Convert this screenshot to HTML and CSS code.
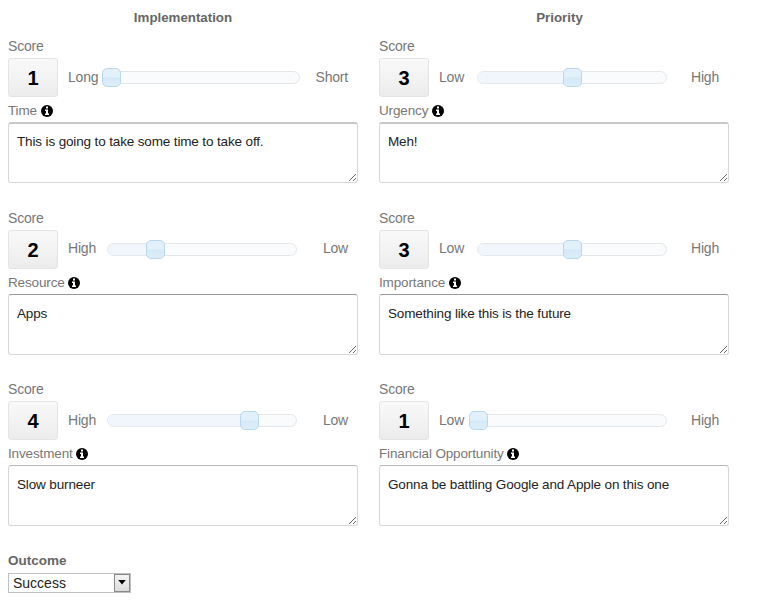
FILE: index.html
```
<!DOCTYPE html>
<html lang="en">
<head>
<meta charset="utf-8">
<title>Scores</title>
<link rel="stylesheet" href="styles.css">
</head>
<body>
<svg width="0" height="0" class="defs"><symbol id="info" viewBox="0 0 12 12"><circle cx="6" cy="6" r="6" fill="#000"/><path fill="#fff" d="M5 1.5h2v2H5zM4 4.5h3v4h1V10H4V8.500h1V6H4z"/></symbol></svg>
<main class="board">
<section class="column">
<h2>Implementation</h2>
<article class="card"><div class="caption">Score</div><div class="rating"><output>1</output><span class="from from-long">Long</span><div class="track"><div class="fill" style="width:0%"><i class="handle"></i></div></div><span class="to">Short</span></div><div class="name">Time <svg><use href="#info"/></svg></div><textarea class="first">This is going to take some time to take off.</textarea></article>
<article class="card"><div class="caption">Score</div><div class="rating"><output>2</output><span class="from">High</span><div class="track"><div class="fill" style="width:25%"><i class="handle"></i></div></div><span class="to">Low</span></div><div class="name">Resource <svg><use href="#info"/></svg></div><textarea class="crisp">Apps</textarea></article>
<article class="card"><div class="caption">Score</div><div class="rating"><output>4</output><span class="from">High</span><div class="track"><div class="fill" style="width:75%"><i class="handle"></i></div></div><span class="to">Low</span></div><div class="name">Investment <svg><use href="#info"/></svg></div><textarea>Slow burneer</textarea></article>
</section>
<section class="column">
<h2 class="priority">Priority</h2>
<article class="card"><div class="caption">Score</div><div class="rating"><output>3</output><span class="from from-low">Low</span><div class="track"><div class="fill" style="width:50%"><i class="handle"></i></div></div><span class="to">High</span></div><div class="name">Urgency <svg><use href="#info"/></svg></div><textarea class="first">Meh!</textarea></article>
<article class="card"><div class="caption">Score</div><div class="rating"><output>3</output><span class="from from-low">Low</span><div class="track"><div class="fill" style="width:50%"><i class="handle"></i></div></div><span class="to">High</span></div><div class="name">Importance <svg><use href="#info"/></svg></div><textarea class="crisp">Something like this is the future</textarea></article>
<article class="card"><div class="caption">Score</div><div class="rating"><output>1</output><span class="from from-low">Low</span><div class="track"><div class="fill" style="width:0%"><i class="handle"></i></div></div><span class="to">High</span></div><div class="name">Financial Opportunity <svg><use href="#info"/></svg></div><textarea>Gonna be battling Google and Apple on this one</textarea></article>
</section>
</main>
<footer class="outcome"><label>Outcome</label><div class="select"><span>Success</span><b><svg viewBox="0 0 6 4"><path d="M0 0h6L3 3.500z"/></svg></b></div></footer>
</body>
</html>
```
FILE: styles.css
```
* { box-sizing: border-box; }
body { margin: 0; background: #fff; color: #777; font: 13.5px/20px "Liberation Sans", Arial, sans-serif; letter-spacing: -0.14px; }
.defs { display: block; }
.board { display: grid; grid-template-columns: 350px 350px; column-gap: 21px; padding: 8px 0 0 8px; }
h2 { margin: 0 0 8px; color: #666; font-size: 13.3px; line-height: 20px; letter-spacing: 0; text-align: center; }
.priority { padding-left: 11px; }
.card { height: 171.5px; }
.caption { font-size: 14px; letter-spacing: -0.2px; }
.rating { display: flex; align-items: center; height: 39px; margin-top: 2px; padding-right: 10px; font-size: 14px; letter-spacing: -0.2px; }
output { width: 50px; height: 39px; border: 1px solid #e4e4e4; border-radius: 3px; background: linear-gradient(#f9f9f9, #ececec); color: #000; font-size: 20px; font-weight: bold; line-height: 38px; letter-spacing: 0; text-align: center; }
.from { width: 39px; margin: -2px 0 0 10px; }
.from-low { width: 38px; }
.from-long { width: 42px; }
.track { width: 190px; height: 13px; border: 1px solid #e4e7e9; border-radius: 7px; background: #fafbfc; }
.from-long + .track { width: 198px; margin-left: -8px; padding-left: 8px; }
.fill { position: relative; height: 100%; border-radius: 6px 0 0 6px; background: #f0f6fb; }
.handle { position: absolute; right: -9.5px; top: -4px; width: 19px; height: 19px; border: 1px solid #b9d8ee; border-radius: 5px; background: linear-gradient(#e2f0fa 0 48%, #d4e9f8 52%, #dceef9); }
.to { margin: -2px 0 0 auto; }
.name { height: 20px; margin-top: 4px; }
.name svg { width: 12px; height: 12px; vertical-align: -2px; }
textarea { display: block; width: 350px; height: 61px; margin-top: 1px; padding: 9px 8px; border: 1px solid #d7d7d7; border-top: 1px solid #b8b8b8; border-radius: 3px; outline: 0; resize: vertical; color: #222; font: inherit; letter-spacing: inherit; overflow: hidden; }
.first { padding-top: 8px; border-top: 2px solid #c8c8c8; }
.crisp { border-top-color: #999; }
.outcome { margin: 0 0 0 8px; }
.outcome label { display: block; color: #666; font-size: 13.5px; font-weight: bold; letter-spacing: 0; }
.select { display: flex; width: 123px; height: 20px; margin-top: 2px; border: 1px solid #bfc0c3; background: #fff; color: #222; font-size: 14px; line-height: 19px; letter-spacing: 0; }
.select span { flex: 1; padding-left: 4px; }
.select b { display: grid; place-items: center; width: 16px; height: 18px; border: 1px solid #888; background: linear-gradient(#f4f4f4, #dcdcdc); }
.select svg { width: 8px; height: 5px; }
```
